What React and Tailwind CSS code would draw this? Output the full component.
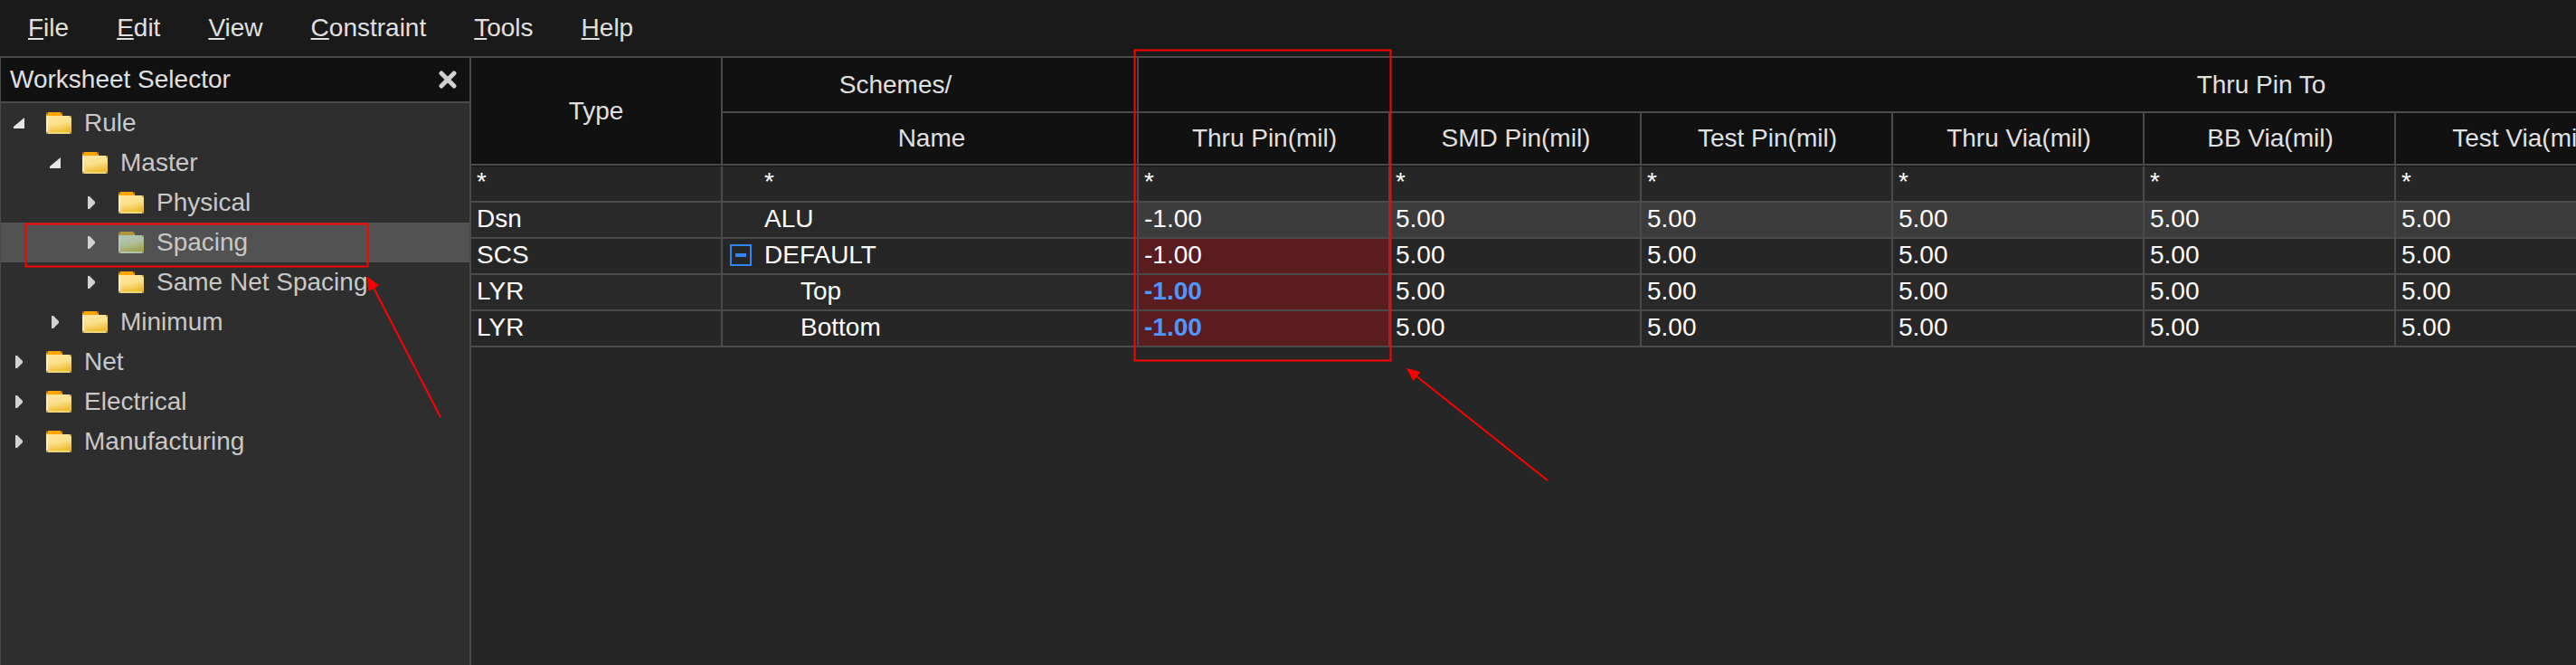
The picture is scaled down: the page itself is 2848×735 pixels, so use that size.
import React from "react";

const menus = ["File", "Edit", "View", "Constraint", "Tools", "Help"];

const tree = [
  { label: "Rule", level: 0, open: true },
  { label: "Master", level: 1, open: true },
  { label: "Physical", level: 2 },
  { label: "Spacing", level: 2, selected: true },
  { label: "Same Net Spacing", level: 2 },
  { label: "Minimum", level: 1 },
  { label: "Net", level: 0 },
  { label: "Electrical", level: 0 },
  { label: "Manufacturing", level: 0 },
];

const indents = ["pl-[14px]", "pl-[54px]", "pl-[94px]"];

const columns = [
  "Thru Pin(mil)",
  "SMD Pin(mil)",
  "Test Pin(mil)",
  "Thru Via(mil)",
  "BB Via(mil)",
  "Test Via(mil)",
];

const fives = ["5.00", "5.00", "5.00", "5.00", "5.00"];

const rows = [
  { type: "Dsn", name: "ALU", indent: "pl-[46px]", values: ["-1.00", ...fives], tone: "bg-[#3c3c3c]" },
  { type: "SCS", name: "DEFAULT", indent: "pl-2", expander: true, values: ["-1.00", ...fives], error: "bg-[#5b1c20]" },
  { type: "LYR", name: "Top", indent: "pl-[86px]", values: ["-1.00", ...fives], error: "bg-[#5b1c20] font-bold text-[#4f96ff]" },
  { type: "LYR", name: "Bottom", indent: "pl-[86px]", values: ["-1.00", ...fives], error: "bg-[#5b1c20] font-bold text-[#4f96ff]" },
];

const line = "border-r-2 border-b-2 border-[#4a4a4a] text-left";
const cell = `${line} h-10 pb-[2px]`;
const filter = `${line} h-[41px] border-t border-t-[#111111] pb-1`;
const head = "border-r-2 border-b-2 border-[#4a4a4a] bg-[#111111] text-center font-normal text-[#e0e0e0]";

function Folder({ selected }) {
  const id = selected ? "folder-selected" : "folder";
  return (
    <svg width="28" height="24" viewBox="0 0 28 24" aria-hidden="true" className="shrink-0">
      <defs>
        <linearGradient id={id} x1="0.3" y1="0" x2="0.6" y2="1">
          <stop offset="0" stopColor={selected ? "#b0c4b4" : "#fde59c"} />
          <stop offset="0.45" stopColor={selected ? "#aebf9f" : "#fbe08c"} />
          <stop offset="0.9" stopColor={selected ? "#a3a552" : "#eebd30"} />
        </linearGradient>
      </defs>
      <path d="M0 0H18V6H0Z" fill={selected ? "#b0943c" : "#ffa500"} />
      <path d="M0 0H2V2H0ZM16 0H18V2H16Z" fill={selected ? "#7d6c3c" : "#946812"} />
      <path d="M0 4H28V24H0Z" fill={`url(#${id})`} />
      <path d="M0 6H2V22H0Z" fill={selected ? "#b4c9c0" : "#fff0bd"} opacity="0.8" />
      <path d="M2 22H26V24H2Z" fill={selected ? "#b0c4a8" : "#f3d67c"} />
      <path d="M26 4H28V6H26ZM0 22H2V24H0ZM26 22H28V24H26Z" fill={selected ? "#87937c" : "#a8965c"} />
    </svg>
  );
}

function Arrow({ open }) {
  return (
    <svg width="12" height="14" viewBox="0 0 12 14" aria-hidden="true" className="shrink-0">
      {open ? <path d="M12 1V13H0V11Z" fill="#e6e6e6" /> : <path d="M2 0H4L10 6V8L4 14H2Z" fill="#d2d2d2" />}
    </svg>
  );
}

function Sidebar() {
  return (
    <aside className="flex w-[521px] shrink-0 flex-col border-r-2 border-l border-[#4a4a4a] bg-[#2e2e2e]">
      <header className="flex h-[50px] items-center justify-between border-b-2 border-[#4a4a4a] bg-[#111111] pr-[14px] pl-[10px] text-[#e0e0e0]">
        <h2>Worksheet Selector</h2>
        <button type="button" aria-label="Close">
          <svg width="20" height="20" viewBox="0 0 20 20" className="block" aria-hidden="true">
            <path d="M3 3L17 17M17 3L3 17" stroke="#d0d0d0" strokeWidth="5" strokeLinecap="round" />
          </svg>
        </button>
      </header>
      <ul>
        {tree.map((n) => (
          <li key={n.label}>
            <button
              type="button"
              className={`flex h-11 w-full items-center whitespace-nowrap text-[#c8c8c8] ${indents[n.level]} ${n.selected ? "bg-[#525252]" : ""}`}
            >
              <Arrow open={n.open} />
              <span className="pr-[14px] pl-6">
                <Folder selected={n.selected} />
              </span>
              {n.label}
            </button>
          </li>
        ))}
      </ul>
    </aside>
  );
}

function Worksheet() {
  return (
    <main className="min-w-0 flex-1 overflow-hidden bg-[#262626]">
      <table className="w-[3222px] table-fixed border-separate border-spacing-0 text-white">
        <colgroup>
          <col className="w-[278px]" />
          <col className="w-[460px]" />
          {columns.map((c) => (
            <col key={c} className="w-[278px]" />
          ))}
          <col />
        </colgroup>
        <thead>
          <tr>
            <th rowSpan={2} className={head}>Type</th>
            <th className={`${head} h-[61px] pr-[76px]`}>Schemes/</th>
            <th colSpan={7} className={head}>Thru Pin To</th>
          </tr>
          <tr>
            <th className={`${head} h-[58px] pl-1`}>Name</th>
            {columns.map((c) => (
              <th key={c} className={`${head} pl-[2px]`}>{c}</th>
            ))}
            <th className={head} />
          </tr>
        </thead>
        <tbody>
          <tr className="bg-[#262626]">
            <td className={`${filter} pl-[6px]`}>*</td>
            <td className={`${filter} pl-[46px]`}>*</td>
            {columns.map((c) => (
              <td key={c} className={`${filter} pl-[6px]`}>*</td>
            ))}
            <td className={filter} />
          </tr>
          {rows.map((r, n) => (
            <tr key={r.name} className={n % 2 ? "bg-[#262626]" : "bg-[#292929]"}>
              <td className={`${cell} pl-[6px]`}>{r.type}</td>
              <td className={`${cell} ${r.indent}`}>
                {r.expander ? (
                  <div className="flex items-center gap-[14px]">
                    <button type="button" aria-label="Collapse DEFAULT" className="flex size-6 items-center justify-center border-2 border-[#2f86f6]">
                      <span className="h-1 w-3 bg-[#2f86f6]" />
                    </button>
                    {r.name}
                  </div>
                ) : (
                  r.name
                )}
              </td>
              {r.values.map((v, i) => (
                <td key={columns[i]} className={`${cell} pl-[6px] ${r.tone || ""} ${i === 0 && r.error ? r.error : ""}`}>
                  {v}
                </td>
              ))}
              <td className={`${cell} ${r.tone || ""}`} />
            </tr>
          ))}
        </tbody>
      </table>
    </main>
  );
}

function Annotations() {
  return (
    <svg className="pointer-events-none absolute inset-0 h-full w-full" aria-hidden="true">
      <g fill="none" stroke="#ff0000" strokeWidth="2">
        <rect x="28.5" y="247.5" width="378" height="47" />
        <rect x="1254.5" y="55.5" width="283" height="343" />
        <path d="M413 318L487 461" />
        <path d="M1565 415L1711 531" />
      </g>
      <path d="M406 305.5L419 315.5L407.5 322Z" fill="#ff0000" />
      <path d="M1555 407L1570.5 411L1562.5 421Z" fill="#ff0000" />
    </svg>
  );
}

export default function App() {
  return (
    <div className="relative flex h-screen flex-col overflow-hidden bg-[#262626] font-['Liberation_Sans',Arial,sans-serif] text-[28px] leading-[32px]">
      <nav className="flex h-16 shrink-0 items-center gap-[53px] border-b-2 border-[#4a4a4a] bg-[#1a1a1a] pl-[31px] text-[#e0e0e0]">
        {menus.map((m) => (
          <button key={m} type="button">
            <span className="underline decoration-2 underline-offset-2 [text-decoration-skip-ink:none]">{m[0]}</span>
            {m.slice(1)}
          </button>
        ))}
      </nav>
      <div className="flex min-h-0 flex-1">
        <Sidebar />
        <Worksheet />
      </div>
      <Annotations />
    </div>
  );
}
